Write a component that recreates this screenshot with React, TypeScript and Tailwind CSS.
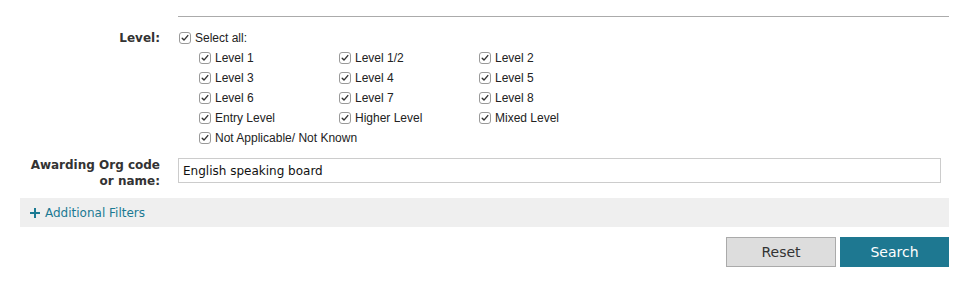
import type { ReactNode } from "react";

const levels = [
  "Level 1",
  "Level 1/2",
  "Level 2",
  "Level 3",
  "Level 4",
  "Level 5",
  "Level 6",
  "Level 7",
  "Level 8",
  "Entry Level",
  "Higher Level",
  "Mixed Level",
  "Not Applicable/ Not Known",
];

function Box() {
  return (
    <svg width="12" height="12" viewBox="0 0 12 12" className="shrink-0">
      <rect x="0.5" y="0.5" width="11" height="11" rx="2.5" fill="#fff" stroke="#9a9a9a" />
      <path d="M3.2 6.2 L5 8.1 L8.8 3.6" fill="none" stroke="#333" strokeWidth="1.4" strokeLinecap="round" strokeLinejoin="round" />
    </svg>
  );
}

function Check({ children }: { children: ReactNode }) {
  return (
    <label className="flex h-5 items-center gap-[4px] pl-px text-[12px] text-[#222] [font-family:'Liberation_Sans',Arial,sans-serif]">
      <Box />
      <span className="whitespace-nowrap">{children}</span>
    </label>
  );
}

export default function App() {
  return (
    <div className="bg-white pt-4 pr-[15px] pl-5 [font-family:'DejaVu_Sans',Verdana,sans-serif]">
      <div className="grid grid-cols-[140px_1fr] gap-x-[18px]">
        <div />
        <div className="border-t border-[#ababab]" />

        {/* Level */}
        <div className="mt-[11px] flex h-5 items-center justify-end text-[12px] font-bold text-[#333]">Level:</div>
        <div className="mt-[11px]">
          <Check>Select all:</Check>
          <div className="grid grid-cols-[140px_140px_140px] pl-5">
            {levels.map((l) => (
              <Check key={l}>{l}</Check>
            ))}
          </div>
        </div>

        {/* Awarding org */}
        <div className="mt-[9px] text-right text-[12px] leading-4 font-bold text-[#333]">
          Awarding Org code
          <br />
          or name:
        </div>
        <div className="mt-[10px] pr-[8px]">
          <input
            readOnly
            value="English speaking board"
            className="block h-[25px] w-full border border-[#cccccc] px-[4px] text-[12px] text-[#111] outline-none [font-family:'DejaVu_Sans',Verdana,sans-serif]"
          />
        </div>
      </div>

      <div className="mt-[9px] flex h-[29px] items-center gap-[5px] bg-[#efefef] pl-[10px] text-[12px] text-[#1b7a93]">
        <svg width="10" height="10" viewBox="0 0 10 10">
          <path d="M5 0 V10 M0 5 H10" stroke="#1b7a93" strokeWidth="2" />
        </svg>
        <span>Additional Filters</span>
      </div>

      <div className="mt-[10px] flex justify-end gap-[4px]">
        <button type="button" className="h-[30px] w-[110px] border border-[#aaaaaa] bg-[#dddddd] text-[14px] text-[#333]">
          Reset
        </button>
        <button type="button" className="h-[30px] w-[109px] bg-[#1e7891] text-[14px] text-white">
          Search
        </button>
      </div>
    </div>
  );
}
